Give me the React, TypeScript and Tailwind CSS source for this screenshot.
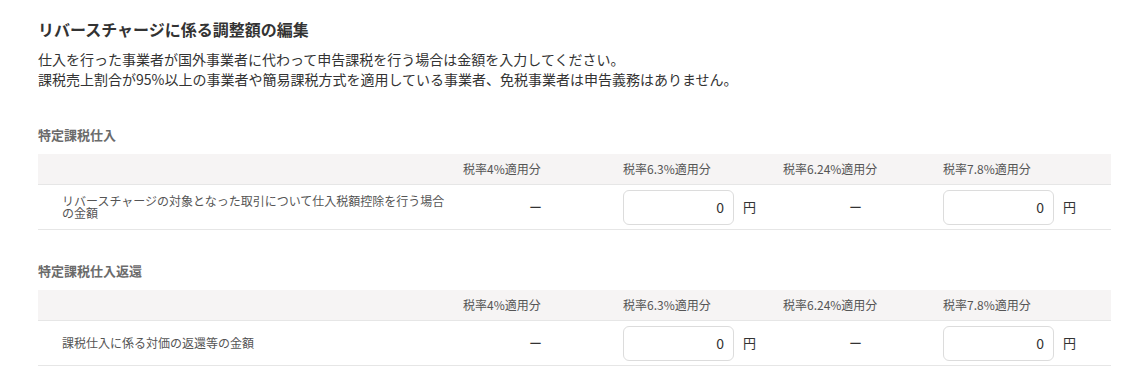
const rates = ["税率4%適用分", "税率6.3%適用分", "税率6.24%適用分", "税率7.8%適用分"]

interface Section {
  title: string
  label: string
}

const sections: Section[] = [
  {
    title: "特定課税仕入",
    label: "リバースチャージの対象となった取引について仕入税額控除を行う場合の金額",
  },
  {
    title: "特定課税仕入返還",
    label: "課税仕入に係る対価の返還等の金額",
  },
]

function Dash() {
  return (
    <div className="flex h-full items-center">
      <span className="ml-[67px] w-[12px] text-[13px] text-[#333]">ー</span>
    </div>
  )
}

function YenInput() {
  return (
    <div className="flex h-full items-center pl-px">
      <input
        type="text"
        defaultValue="0"
        className="h-[35px] w-[111px] rounded-md border border-[#dcdcdc] bg-white pr-[9px] text-right text-[14px] text-[#333] outline-none"
      />
      <span className="ml-[9px] text-[13px] text-[#333]">円</span>
    </div>
  )
}

function AdjustTable({ section }: { section: Section }) {
  return (
    <div className="mt-[28px] first:mt-0">
      <h2 className="h-[26px] text-[13px] font-bold leading-[26px] text-[#6b6b6b]">{section.title}</h2>
      <div className="mt-[6px] w-[1073px]">
        <div className="grid h-[31px] grid-cols-[424px_160px_160px_160px_160px_1fr] items-center border-b border-[#e6e6e6] bg-[#f6f4f4]">
          <div />
          {rates.map((r) => (
            <div key={r} className="pl-px text-[12px] text-[#555]">
              {r}
            </div>
          ))}
          <div />
        </div>
        <div className="grid h-[45px] grid-cols-[424px_160px_160px_160px_160px_1fr] items-center border-b border-[#e6e6e6]">
          <div className="pl-[24px] pr-[10px] text-[12px] leading-[12px] text-[#555]">{section.label}</div>
          <Dash />
          <YenInput />
          <Dash />
          <YenInput />
          <div />
        </div>
      </div>
    </div>
  )
}

export default function App() {
  return (
    <div
      className="min-h-[380px] w-[1141px] bg-white px-[38px] pt-[17px]"
      style={{ fontFamily: '"Noto Sans CJK JP", "Noto Sans", sans-serif' }}
    >
      <h1 className="text-[16px] font-bold leading-[24px] text-[#333]">リバースチャージに係る調整額の編集</h1>
      <p className="mt-[8px] text-[14px] leading-[20px] text-[#333]">
        仕入を行った事業者が国外事業者に代わって申告課税を行う場合は金額を入力してください。
        <br />
        課税売上割合が95%以上の事業者や簡易課税方式を適用している事業者、免税事業者は申告義務はありません。
      </p>
      <div className="mt-[33px]">
        {sections.map((s) => (
          <AdjustTable key={s.title} section={s} />
        ))}
      </div>
    </div>
  )
}
